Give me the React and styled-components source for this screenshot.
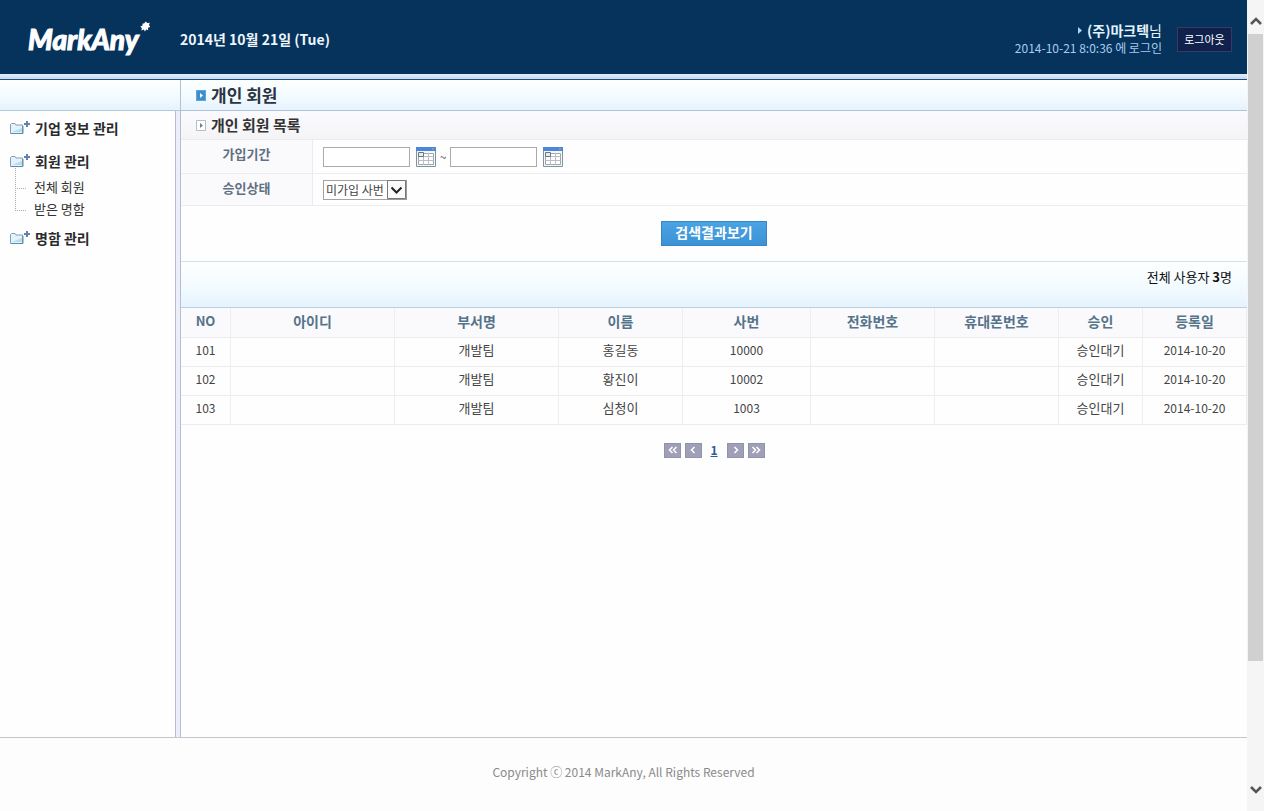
import React from 'react';
import styled, { createGlobalStyle, css } from 'styled-components';

const GlobalStyle = createGlobalStyle`
  * {
    box-sizing: border-box;
  }

  body {
    margin: 0;
    background: #fdfdfe;
    color: #333;
    font-family: 'Noto Sans CJK KR', 'Liberation Sans', sans-serif;
    font-size: 13px;
    line-height: 20px;
  }

  a {
    color: inherit;
    text-decoration: none;
  }

  button,
  input,
  select {
    margin: 0;
    padding: 0;
    border-radius: 0;
    font-family: inherit;
  }

  svg {
    display: block;
    flex: none;
  }

  ul {
    margin: 0;
    padding: 0;
    list-style: none;
  }
`;

const barGradient = css`
  background: linear-gradient(180deg, #fdffff 0%, #f2fbff 55%, #e6f2fd 100%);
`;

const Window = styled.div`
  display: flex;
  min-height: 100vh;
`;
const Page = styled.div`
  display: flex;
  flex: 1;
  flex-direction: column;
  min-width: 0;
`;

const Header = styled.header`
  display: flex;
  align-items: center;
  height: 80px;
  padding: 0 15px 1px 28px;
  border-bottom: 1px solid #2b4c78;
  background: linear-gradient(180deg, #05335b 74px, #e3effc 74px, #bfdbf6 79px);
`;
const Logo = styled.a`
  display: flex;
  width: 152px;
  color: #fff;
  font-family: Lato, sans-serif;
  font-size: 28px;
  font-style: italic;
  font-weight: 900;
  line-height: 32px;
  -webkit-text-stroke: 1px #fff;

  svg {
    margin-top: -2px;
  }
`;
const Today = styled.time`
  flex: 1;
  color: #eef5fb;
  font-size: 14px;
  font-weight: 700;
`;
const Account = styled.div`
  margin-right: 15px;
  color: #a9cbee;
  font-size: 12px;
  line-height: 18px;
  text-align: right;
`;
const UserName = styled.div`
  display: flex;
  align-items: center;
  justify-content: flex-end;
  gap: 5px;
  color: #e4f3ff;
  font-size: 14px;

  span span {
    font-weight: 400;
  }

  > span {
    font-weight: 700;
  }
`;
const LogoutButton = styled.button`
  width: 55px;
  height: 25px;
  border: 1px solid #3c3766;
  background: #10224c;
  color: #fff;
  font-size: 11px;
`;

const Body = styled.div`
  display: flex;
  flex: 1;
`;
const Sidebar = styled.aside`
  display: flex;
  flex: none;
  flex-direction: column;
  width: 181px;
  border-right: 1px solid #b3c0d4;
`;
const SidebarTop = styled.div`
  ${barGradient};
  height: 31px;
  border-bottom: 1px solid #b5c7da;
`;
const MenuArea = styled.div`
  flex: 1;
  display: flex;
  padding-right: 4px;
  background: #eceffa;
`;
const Menu = styled.nav`
  flex: 1;
  padding: 7px 0 0 10px;
  border-right: 1px solid #b9bccb;
  background: #fefefe;
`;
const MenuGroup = styled.div`
  margin-bottom: ${({ $open }) => ($open ? '8px' : '13px')};
`;
const MenuTitle = styled.a`
  display: flex;
  align-items: center;
  gap: 4px;
  height: 20px;
  color: #2a2a2a;
  font-size: 14px;
  font-weight: 700;
`;
const SubMenu = styled.ul`
  padding: 5px 0 0 5px;

  li {
    display: flex;
    gap: 7px;
    height: 22px;
    line-height: 22px;
  }
`;

const Content = styled.main`
  flex: 1;
  min-width: 0;
  background: #fefefe;
`;
const PageTitle = styled.h1`
  ${barGradient};
  display: flex;
  align-items: center;
  gap: 5px;
  height: 31px;
  margin: 0;
  padding-left: 15px;
  border-bottom: 1px solid #b0c4d8;
  color: #2b3442;
  font-size: 17px;
`;
const SectionTitle = styled.h2`
  display: flex;
  align-items: center;
  gap: 5px;
  height: 29px;
  margin: 0;
  padding-left: 15px;
  border-bottom: 1px solid #ececf0;
  background: linear-gradient(180deg, #fbfbff, #f4f4f6);
  color: #333;
  font-size: 15px;
`;
const FormRow = styled.div`
  display: flex;
  height: ${({ $tall }) => ($tall ? '34px' : '32px')};
  border-bottom: 1px solid #ededf0;
`;
const FormLabel = styled.label`
  width: 132px;
  border-right: 1px solid #ebebef;
  background: #fafafd;
  color: #607082;
  font-weight: 700;
  line-height: 28px;
  text-align: center;
`;
const FormField = styled.div`
  display: flex;
  align-items: center;
  padding-left: 10px;
`;
const DateInput = styled.input`
  width: 87px;
  height: 20px;
  border: 1px solid #ababab;
  background: #fff;
  font-size: 12px;
`;
const CalendarButton = styled.button`
  margin-left: 6px;
  border: 0;
  background: none;
`;
const Tilde = styled.span`
  width: 14px;
  color: #555;
  font-size: 12px;
  text-align: center;
`;
const SelectBox = styled.div`
  display: grid;
  align-items: center;

  select,
  svg {
    grid-area: 1 / 1;
  }

  svg {
    justify-self: end;
    pointer-events: none;
  }
`;
const StatusSelect = styled.select`
  width: 84px;
  height: 20px;
  padding-left: 2px;
  appearance: none;
  border: 1px solid #a3a3a3;
  background: #fff;
  color: #444;
  font-size: 12px;
  line-height: 18px;
`;
const SearchArea = styled.div`
  display: flex;
  justify-content: center;
  padding: 15px 0;
`;
const SearchButton = styled.button`
  width: 106px;
  height: 25px;
  padding-bottom: 3px;
  border: 1px solid #3786c6;
  background: linear-gradient(180deg, #4aa3e2, #3c92d6);
  color: #fff;
  font-size: 14px;
  font-weight: 700;
  line-height: 20px;
`;
const Summary = styled.div`
  ${barGradient};
  height: 47px;
  padding: 5px 15px;
  border-top: 1px solid #d3e1ea;
  border-bottom: 1px solid #b9d0de;
  color: #111;
  text-align: right;
`;

const MemberTable = styled.table`
  width: 100%;
  border-collapse: separate;
  border-spacing: 0;
  table-layout: fixed;

  th,
  td {
    height: 29px;
    padding: 0 0 4px;
    border-right: 1px solid #eeeef1;
    border-bottom: 1px solid #ececef;
    text-align: center;
  }

  th {
    height: 30px;
    background: #fafafd;
    color: #557389;
    font-size: 14px;
  }

  td {
    color: #444;
  }
`;
const NumberHeading = styled.span`
  font-size: 13px;
`;
const NumberCell = styled.td`
  font-size: 12px;
`;
const Pager = styled.nav`
  display: flex;
  align-items: center;
  justify-content: center;
  gap: 4px;
  padding-top: 15px;
`;
const PageButton = styled.button`
  display: grid;
  place-items: center;
  width: 17px;
  height: 15px;
  border: 1px solid #9293ab;
  background: #a09fb8;
`;
const PageLink = styled.a`
  width: 17px;
  color: #2f5c96;
  font-size: 12px;
  font-weight: 700;
  text-align: center;
  text-decoration: underline;
`;

const Footer = styled.footer`
  height: 74px;
  border-top: 1px solid #c3c7cd;
  color: #8a8a8a;
  font-size: 12px;
  line-height: 68px;
  text-align: center;
`;

const ScrollTrack = styled.div`
  display: flex;
  flex: none;
  flex-direction: column;
  width: 17px;
  padding-left: 1px;
  background: #f5f5f5;
`;
const ScrollArrow = styled.div`
  display: flex;
  align-items: center;
  justify-content: center;
  height: ${({ $up }) => ($up ? '34px' : '44px')};
  padding-top: ${({ $up }) => ($up ? '8px' : '0')};
`;
const ScrollThumb = styled.div`
  flex: 627;
  margin-right: 1px;
  background: #d0d0d0;
`;
const ScrollRest = styled.div`
  flex: 106;
`;

const LogoMark = () => (
  <svg width="12" height="12" viewBox="0 0 12 12" fill="#fff">
    <path d="M5 2.6 6.8.6l1.4 1.5 2.6-.4-.8 2.4 1.2 2-2.2.7.2 2.4-2-.6-1.2 2-1.3-2-2.3.8.4-2.4-1.6-1.4 2.2-.8.2-2.2z" />
  </svg>
);

const FolderIcon = () => (
  <svg width="21" height="14" viewBox="0 0 21 14">
    <path d="M.5 12.5v-9l1-1H5l1 1.5h6.5v8.5z" fill="#e4f3fb" stroke="#7f9fb5" />
    <path d="M2 11h10V7z" fill="#b6dcf0" />
    <path d="M1 12.5h12M13 5v7.5" stroke="#5f8cab" />
    <path d="M17 0v6M14 3h6" stroke="#5f83ad" strokeWidth="2" />
  </svg>
);

const Branch = ({ first }) => (
  <svg width="12" height="22" viewBox="0 0 12 22" overflow="visible">
    <path d={first ? 'M.5-8v30' : 'M.5 0v12'} stroke="#aaa" strokeDasharray="1 1" fill="none" />
    <path d="M0 12.5h12" stroke="#aaa" strokeDasharray="1 1" />
  </svg>
);

const TitleIcon = () => (
  <svg width="10" height="11" viewBox="0 0 10 11">
    <path d="M0 0h10v11H0z" fill="#3f8dcb" />
    <path d="M.5.5h9v10h-9z" fill="none" stroke="#5ea5da" />
    <path d="M4 3l3 2.5L4 8z" fill="#fff" />
  </svg>
);

const SectionIcon = () => (
  <svg width="10" height="11" viewBox="0 0 10 11">
    <path d="M.5.5h9v10h-9z" fill="#fff" stroke="#b9bcc4" />
    <path d="M4 3l3 2.5L4 8z" fill="#6c7f97" />
  </svg>
);

const CalendarIcon = () => (
  <svg width="20" height="20" viewBox="0 0 20 20">
    <path d="M.5.5h19v19H.5z" fill="#f4f8f6" stroke="#7d92a4" />
    <path d="M0 0h20v4H0z" fill="#4c86dc" />
    <path d="M16 1h2v2h-2z" fill="#8a9a9a" />
    <path d="M2.5 6.5h15v11h-15z" fill="#fff" stroke="#9aa9a4" />
    <path d="M2.5 9.5h15M2.5 13.5h15M7.5 6v12M12.5 6v12" stroke="#b9bec6" />
    <path d="M2.5 5.5h5v4h-5z" fill="#e9edf0" stroke="#6b7580" />
  </svg>
);

const SelectArrow = () => (
  <svg width="20" height="20" viewBox="0 0 20 20">
    <path d="M.5.5h18v18H.5z" fill="#fbfbfb" stroke="#777" />
    <path d="M0 19.5h20M19.5 0v20" stroke="#999" />
    <path d="M4.5 7.5l5 5 5-5" fill="none" stroke="#222" strokeWidth="2" />
  </svg>
);

const pagerPaths = {
  first: 'M6.5 1 3.5 4l3 3M10.5 1l-3 3 3 3',
  prev: 'M7.5 1l-3 3 3 3',
  next: 'M5.5 1l3 3-3 3',
  last: 'M2.5 1l3 3-3 3M6.5 1l3 3-3 3',
};

const PagerIcon = ({ type }) => (
  <svg width="13" height="8" viewBox="0 0 13 8">
    <path d={pagerPaths[type]} fill="none" stroke="#fff" strokeWidth="1.5" />
  </svg>
);

const ScrollChevron = ({ up }) => (
  <svg width="12" height="9" viewBox="0 0 12 9">
    <path d={up ? 'M1 7l5-5 5 5' : 'M1 2l5 5 5-5'} fill="none" stroke="#555" strokeWidth="2.5" />
  </svg>
);

const menu = [
  { title: '기업 정보 관리' },
  { title: '회원 관리', items: ['전체 회원', '받은 명함'] },
  { title: '명함 관리' },
];

const columns = [
  { label: 'NO', width: 50 },
  { label: '아이디', width: 164 },
  { label: '부서명', width: 164 },
  { label: '이름', width: 124 },
  { label: '사번', width: 128 },
  { label: '전화번호', width: 124 },
  { label: '휴대폰번호', width: 124 },
  { label: '승인', width: 84 },
  { label: '등록일', width: 104 },
];

const members = [
  { no: 101, team: '개발팀', name: '홍길동', code: '10000', status: '승인대기', date: '2014-10-20' },
  { no: 102, team: '개발팀', name: '황진이', code: '10002', status: '승인대기', date: '2014-10-20' },
  { no: 103, team: '개발팀', name: '심청이', code: '1003', status: '승인대기', date: '2014-10-20' },
];

const App = () => (
  <Window>
    <GlobalStyle />
    <Page>
      <Header>
        <Logo href="#">
          MarkAny
          <LogoMark />
        </Logo>
        <Today dateTime="2014-10-21">2014년 10월 21일 (Tue)</Today>
        <Account>
          <UserName>
            <svg width="4" height="7" viewBox="0 0 4 7">
              <path d="M0 0l4 3.5L0 7z" fill="#a9d4f5" />
            </svg>
            <span>
              (주)마크텍<span>님</span>
            </span>
          </UserName>
          2014-10-21 8:0:36 에 로그인
        </Account>
        <LogoutButton type="button">로그아웃</LogoutButton>
      </Header>

      <Body>
        <Sidebar>
          <SidebarTop />
          <MenuArea>
            <Menu>
              {menu.map(({ title, items }) => (
                <MenuGroup key={title} $open={!!items}>
                  <MenuTitle href="#">
                    <FolderIcon />
                    {title}
                  </MenuTitle>
                  {items && (
                    <SubMenu>
                      {items.map((item, i) => (
                        <li key={item}>
                          <Branch first={i === 0} />
                          <a href="#">{item}</a>
                        </li>
                      ))}
                    </SubMenu>
                  )}
                </MenuGroup>
              ))}
            </Menu>
          </MenuArea>
        </Sidebar>

        <Content>
          <PageTitle>
            <TitleIcon />
            개인 회원
          </PageTitle>
          <SectionTitle>
            <SectionIcon />
            개인 회원 목록
          </SectionTitle>

          <form onSubmit={e => e.preventDefault()}>
            <FormRow $tall>
              <FormLabel htmlFor="join-from">가입기간</FormLabel>
              <FormField>
                <DateInput id="join-from" type="text" />
                <CalendarButton type="button" aria-label="시작일 선택">
                  <CalendarIcon />
                </CalendarButton>
                <Tilde>~</Tilde>
                <DateInput type="text" aria-label="종료일" />
                <CalendarButton type="button" aria-label="종료일 선택">
                  <CalendarIcon />
                </CalendarButton>
              </FormField>
            </FormRow>
            <FormRow>
              <FormLabel htmlFor="status">승인상태</FormLabel>
              <FormField>
                <SelectBox>
                  <StatusSelect id="status">
                    <option>미가입 사번</option>
                  </StatusSelect>
                  <SelectArrow />
                </SelectBox>
              </FormField>
            </FormRow>
            <SearchArea>
              <SearchButton type="submit">검색결과보기</SearchButton>
            </SearchArea>
          </form>

          <Summary>
            전체 사용자 <b>3</b>명
          </Summary>

          <MemberTable>
            <colgroup>
              {columns.map(({ label, width }) => (
                <col key={label} width={width} />
              ))}
            </colgroup>
            <thead>
              <tr>
                {columns.map(({ label }) => (
                  <th key={label}>
                    {label === 'NO' ? <NumberHeading>{label}</NumberHeading> : label}
                  </th>
                ))}
              </tr>
            </thead>
            <tbody>
              {members.map(({ no, team, name, code, status, date }) => (
                <tr key={no}>
                  <NumberCell>{no}</NumberCell>
                  <td />
                  <td>{team}</td>
                  <td>{name}</td>
                  <NumberCell>{code}</NumberCell>
                  <td />
                  <td />
                  <td>{status}</td>
                  <NumberCell>{date}</NumberCell>
                </tr>
              ))}
            </tbody>
          </MemberTable>

          <Pager>
            <PageButton type="button" aria-label="처음">
              <PagerIcon type="first" />
            </PageButton>
            <PageButton type="button" aria-label="이전">
              <PagerIcon type="prev" />
            </PageButton>
            <PageLink href="#">1</PageLink>
            <PageButton type="button" aria-label="다음">
              <PagerIcon type="next" />
            </PageButton>
            <PageButton type="button" aria-label="마지막">
              <PagerIcon type="last" />
            </PageButton>
          </Pager>
        </Content>
      </Body>

      <Footer>Copyright ⓒ 2014 MarkAny, All Rights Reserved</Footer>
    </Page>

    <ScrollTrack>
      <ScrollArrow $up>
        <ScrollChevron up />
      </ScrollArrow>
      <ScrollThumb />
      <ScrollRest />
      <ScrollArrow>
        <ScrollChevron />
      </ScrollArrow>
    </ScrollTrack>
  </Window>
);

export default App;
